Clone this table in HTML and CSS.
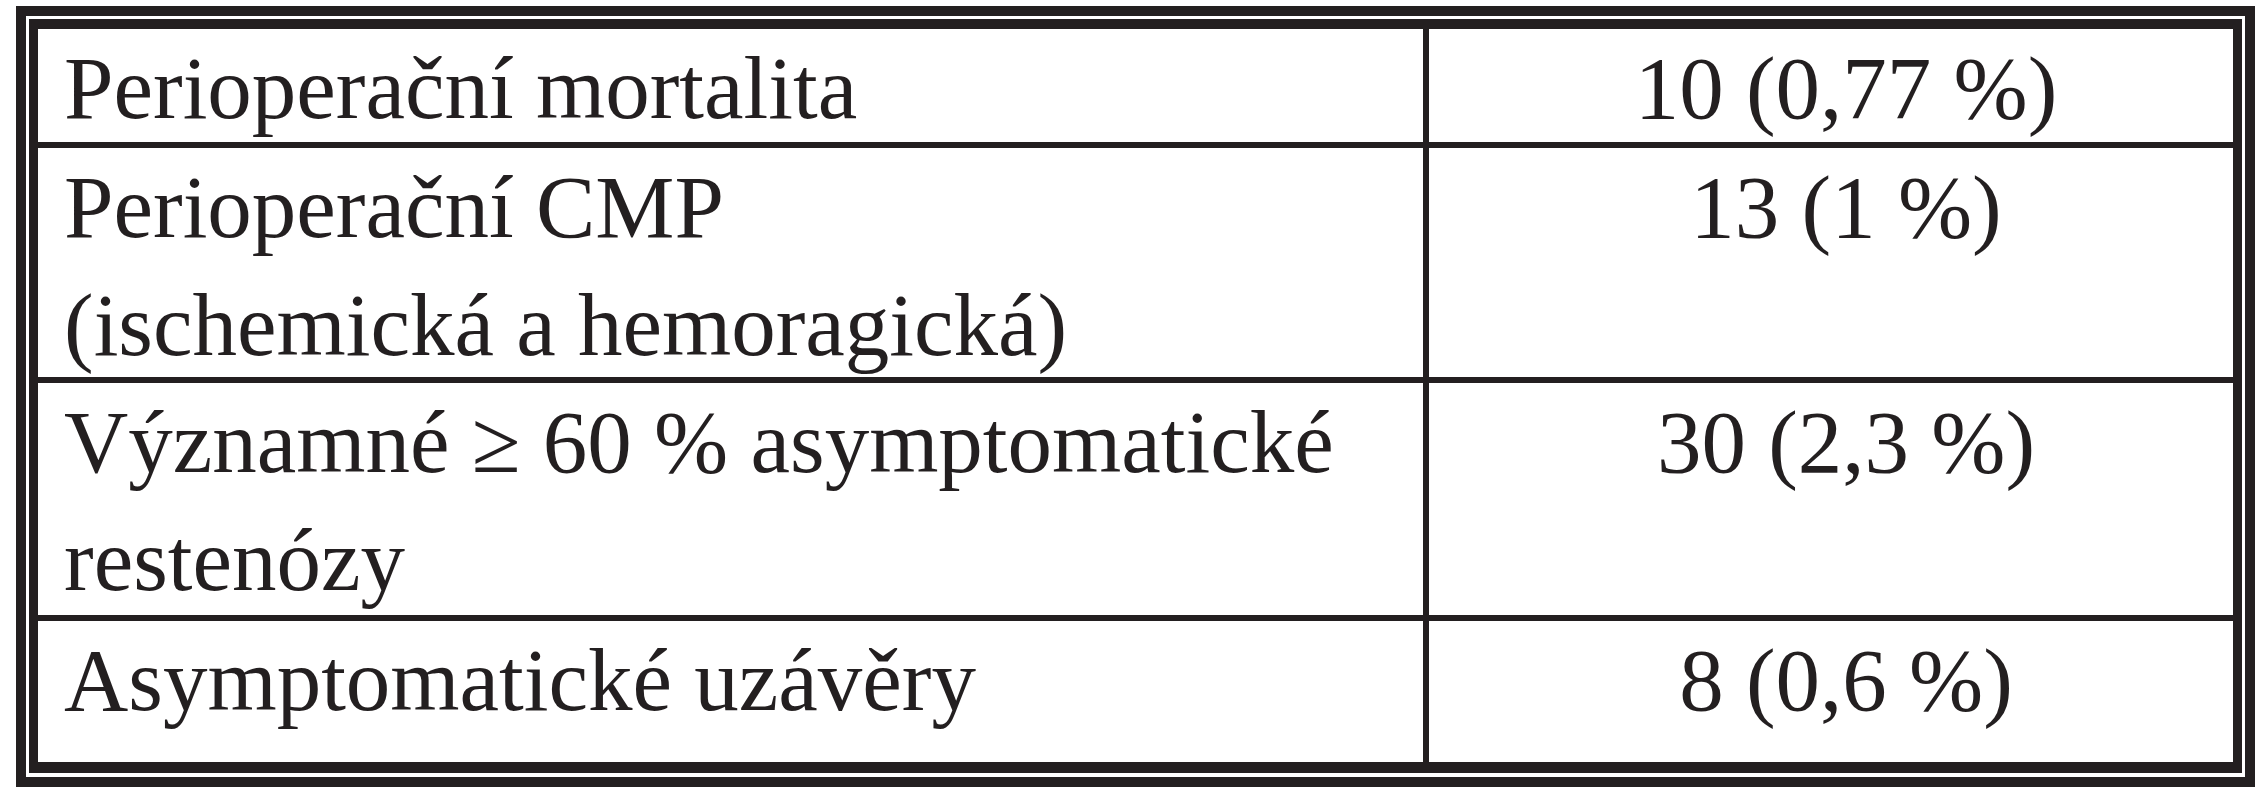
FILE: index.html
```html
<!DOCTYPE html>
<html lang="cs">
<head>
<meta charset="utf-8">
<title>Výsledky</title>
<link rel="stylesheet" href="styles.css">
</head>
<body>
<div class="frame">
  <div class="grid">
    <div class="cell label">Perioperační mortalita</div>
    <div class="cell value">10 (0,77 %)</div>
    <div class="cell label">Perioperační CMP<br>(ischemická a hemoragická)</div>
    <div class="cell value">13 (1 %)</div>
    <div class="cell label">Významné ≥ 60 % asymptomatické<br>restenózy</div>
    <div class="cell value">30 (2,3 %)</div>
    <div class="cell label">Asymptomatické uzávěry</div>
    <div class="cell value">8 (0,6 %)</div>
  </div>
</div>
</body>
</html>
```
FILE: styles.css
```css
html, body {
  margin: 0;
  padding: 0;
  background: #ffffff;
}

.frame {
  box-sizing: border-box;
  width: 2239px;
  margin: 6px 0 0 16px;
  border: 10px solid #231f20;
  padding: 3px 3px 4px 3px;
  background: #ffffff;
}

.grid {
  display: grid;
  grid-template-columns: 1385px 804px;
  grid-template-rows: 113px 229px 232px 141px;
  column-gap: 6px;
  row-gap: 6px;
  background: #231f20;
  padding: 10px 9px 11px 9px;
}

.cell {
  background: #ffffff;
  color: #231f20;
  font-family: "Liberation Serif", "Times New Roman", serif;
  font-size: 89px;
  line-height: 118px;
  overflow: visible;
  white-space: nowrap;
}

.label {
  padding-left: 26px;
}

.value {
  padding-left: 30px;
  text-align: center;
}
```
